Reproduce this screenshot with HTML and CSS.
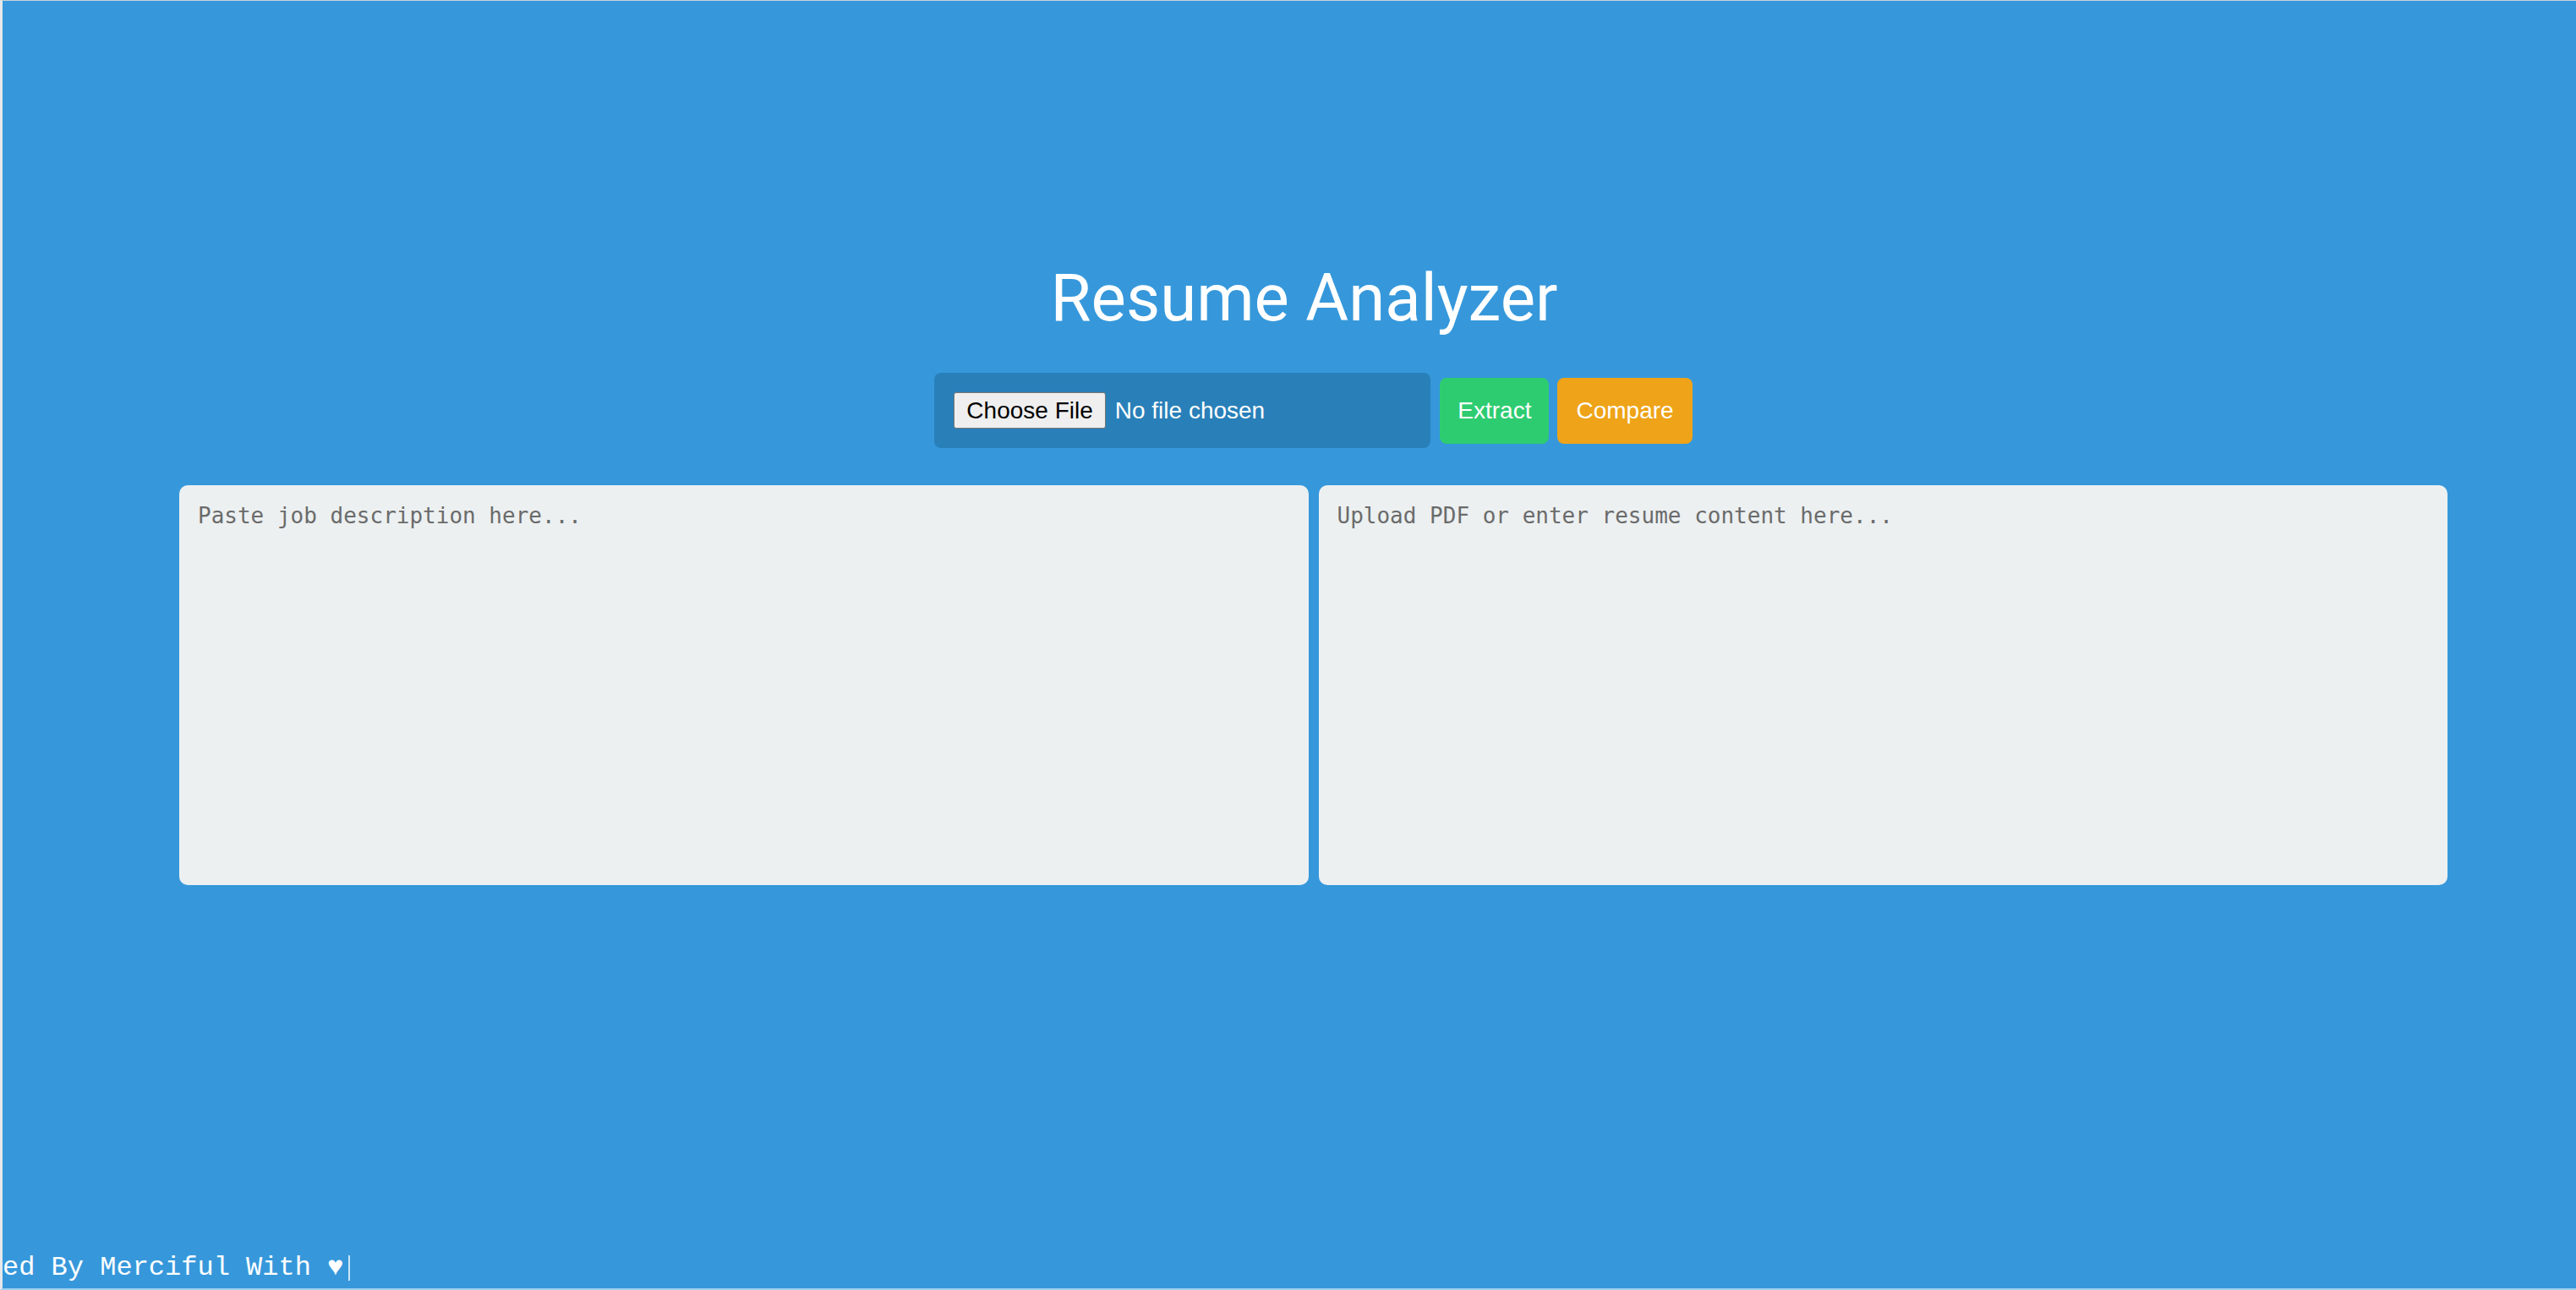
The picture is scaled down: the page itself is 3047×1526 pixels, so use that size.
FILE: index.html
```html
<!DOCTYPE html>
<html lang="en">
<head>
<meta charset="utf-8">
<title>Resume Analyzer</title>
<link rel="stylesheet" href="styles.css">
</head>
<body>
  <main class="app">
    <h1 class="title">Resume Analyzer</h1>
    <div class="controls">
      <div class="file-box">
        <span class="file-btn">Choose File</span>
        <span class="file-name">No file chosen</span>
      </div>
      <button class="btn btn-extract" type="button">Extract</button>
      <button class="btn btn-compare" type="button">Compare</button>
    </div>
    <div class="editors">
      <textarea class="editor" placeholder="Paste job description here..."></textarea>
      <textarea class="editor" placeholder="Upload PDF or enter resume content here..."></textarea>
    </div>
  </main>
  <footer class="footer"><span class="typing">ed By Merciful With ♥</span></footer>
</body>
</html>
```

FILE: styles.css
```css
html {
  height: 100%;
  background: #3498db;
}
* {
  box-sizing: border-box;
}
body {
  margin: 0;
  height: 100vh;
  background: #3698db;
  border-top: 1px solid #c9d3db;
  border-left: 3px solid #e4e8eb;
  border-bottom: 2px solid #9fd0f2;
  display: flex;
  flex-direction: column;
  overflow: hidden;
}
.app {
  padding: 306px 152px 0 209px;
  display: flex;
  flex-direction: column;
  align-items: center;
}
.title {
  margin: 0;
  font-family: Roboto, "Liberation Sans", sans-serif;
  font-weight: 400;
  font-size: 78px;
  line-height: 91px;
  color: #ffffff;
  padding-right: 22px;
}
.controls {
  margin-top: 43px;
  display: flex;
  align-items: center;
  gap: 10px;
  font-family: "Liberation Sans", Arial, sans-serif;
  font-size: 28px;
}
.file-box {
  width: 587px;
  height: 89px;
  background: #2980b9;
  border-radius: 8px;
  padding: 0 23px;
  display: flex;
  align-items: center;
  gap: 11px;
  margin-right: 1px;
}
.file-btn {
  height: 43px;
  padding: 0 14px;
  display: flex;
  align-items: center;
  background: #efefef;
  border: 1px solid #767676;
  border-radius: 3px;
  color: #000000;
}
.file-name {
  color: #ffffff;
}
.btn {
  height: 78px;
  border: none;
  border-radius: 8px;
  padding: 0 21px;
  font-family: "Liberation Sans", Arial, sans-serif;
  font-size: 28px;
  color: #ffffff;
  cursor: pointer;
}
.btn-extract {
  background: #2ecc71;
}
.btn-compare {
  background: #eea318;
  padding: 0 22px;
}
.editors {
  margin-top: 44px;
  width: 100%;
  display: grid;
  grid-template-columns: 1fr 1fr;
  gap: 12px;
}
.editor {
  height: 473px;
  border: none;
  border-radius: 10px;
  background: #ecf0f1;
  padding: 21px 22px;
  font-family: "DejaVu Sans Mono", monospace;
  font-size: 26px;
  color: #333333;
  resize: none;
  outline: none;
}
.editor::placeholder {
  color: #6b6b6b;
}
.footer {
  margin-top: auto;
  padding-bottom: 6px;
  font-family: "Liberation Mono", "Courier New", monospace;
  font-size: 32px;
  line-height: 36px;
  color: #ffffff;
}
.typing {
  display: inline-block;
  padding-right: 6px;
  border-right: 2px solid rgba(255, 255, 255, 0.75);
  line-height: 30px;
}
```
